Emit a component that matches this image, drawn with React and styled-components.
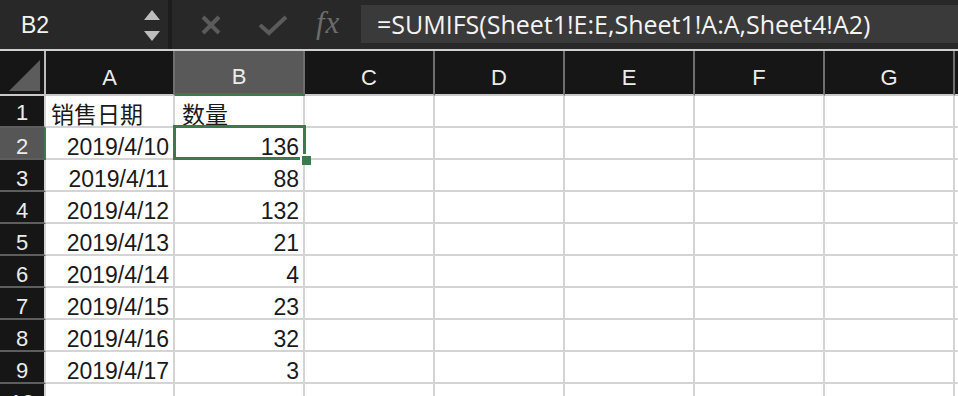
import React from "react";
import styled, { createGlobalStyle, css } from "styled-components";

const Global = createGlobalStyle`
  html, body { margin: 0; padding: 0; background: #ffffff; }
  body { width: 958px; height: 396px; overflow: hidden; font-family: "Liberation Sans", Arial, sans-serif; }
`;

const Page = styled.div`
  width: 958px;
  height: 396px;
  display: flex;
  flex-direction: column;
  overflow: hidden;
`;

const Toolbar = styled.div`
  height: 49px;
  flex: 0 0 49px;
  display: flex;
  align-items: stretch;
  background: #282828;
  border-bottom: 2px solid #cfcfcf;
`;

const NameBox = styled.div`
  width: 168px;
  display: flex;
  align-items: center;
  justify-content: space-between;
  padding: 2px 8px 0 21px;
  box-sizing: border-box;
  color: #f2f2f2;
  font-size: 23px;
`;

const Spinner = styled.div`
  display: flex;
  flex-direction: column;
  gap: 11px;
`;

const Divider = styled.div`
  width: 4px;
  background: #1d1d1d;
`;

const Actions = styled.div`
  display: flex;
  align-items: center;
  padding-left: 28px;
  width: 189px;
  box-sizing: border-box;
`;

const ActionIcon = styled.span`
  display: inline-flex;
  align-items: center;
  justify-content: center;
  width: ${(p) => p.$w}px;
  margin-right: ${(p) => p.$mr}px;
`;

const Fx = styled.span`
  font-family: "Liberation Serif", "Times New Roman", serif;
  font-style: italic;
  font-size: 31px;
  color: #6c6c6c;
  letter-spacing: 1px;
  margin-top: -3px;
`;

const FormulaInput = styled.div`
  flex: 1;
  margin: 5px 0 6px 0;
  background: #3a3a3a;
  display: flex;
  align-items: center;
  padding-left: 16px;
  color: #f4f4f4;
  font-family: "Open Sans", "Noto Sans", sans-serif;
  font-size: 25px;
  white-space: nowrap;
  overflow: hidden;
`;

const Sheet = styled.div`
  display: grid;
  grid-template-columns: 46px 129px 130px 130px 130px 130px 130px 130px 1fr;
  grid-template-rows: 45px;
  grid-auto-rows: 32px;
  background: #ffffff;
`;

const headerBase = css`
  box-sizing: border-box;
  background: #161616;
  color: #ececec;
  font-size: 22px;
  display: flex;
  align-items: center;
  justify-content: center;
`;

const Corner = styled.div`
  ${headerBase};
  border-right: 2px solid #bdbdbd;
  border-bottom: 2px solid #c9c9c9;
  align-items: flex-end;
  justify-content: flex-end;
  padding: 0 4px 3px 0;
`;

const ColHead = styled.div`
  ${headerBase};
  padding-top: 10px;
  border-right: 2px solid #6e6e6e;
  border-bottom: 2px solid ${(p) => (p.$active ? "#3a7a4e" : "#c9c9c9")};
  ${(p) =>
    p.$active &&
    css`
      background: #595959;
      border-bottom-width: 3px;
    `}
`;

const RowHead = styled.div`
  ${headerBase};
  border-bottom: 2px solid #5e5e5e;
  border-right: 2px solid ${(p) => (p.$active ? "#3a7a4e" : "#d4d4d4")};
  padding-top: ${(p) => (p.$first ? 4 : 8)}px;
  ${(p) =>
    p.$active &&
    css`
      background: #565656;
    `}
`;

const Cell = styled.div`
  box-sizing: border-box;
  position: relative;
  border-right: 2px solid #d4d4d4;
  border-bottom: 2px solid #d4d4d4;
  color: #1a1a1a;
  font-family: "Liberation Sans", Arial, "Noto Sans CJK SC", sans-serif;
  font-size: 23px;
  display: flex;
  align-items: center;
  padding: ${(p) => (p.$first ? 3 : 8)}px 4px 0 ${(p) => (p.$pl ? p.$pl : 4)}px;
  justify-content: ${(p) => (p.$right ? "flex-end" : "flex-start")};
  white-space: nowrap;
`;

const Selection = styled.div`
  position: absolute;
  z-index: 2;
  left: -2px;
  top: -3px;
  right: -3px;
  bottom: -2px;
  border: 3px solid #3a7a4e;
  pointer-events: none;
`;

const Handle = styled.div`
  position: absolute;
  right: -8px;
  bottom: -8px;
  width: 9px;
  height: 9px;
  background: #3a7a4e;
  box-shadow: -2px -2px 0 0 #ffffff;
`;

const cols = ["A", "B", "C", "D", "E", "F", "G", ""];
const data = [
  ["2019/4/10", "136"],
  ["2019/4/11", "88"],
  ["2019/4/12", "132"],
  ["2019/4/13", "21"],
  ["2019/4/14", "4"],
  ["2019/4/15", "23"],
  ["2019/4/16", "32"],
  ["2019/4/17", "3"],
];

export default function App() {
  const rows = [["销售日期", "数量", true], ...data.map((d) => [...d, false]), ["", "", false]];
  return (
    <Page>
      <Global />
      <Toolbar>
        <NameBox>
          <span>B2</span>
          <Spinner>
            <svg width="16" height="10" viewBox="0 0 16 10">
              <polygon points="8,0 16,10 0,10" fill="#bdbdbd" />
            </svg>
            <svg width="16" height="10" viewBox="0 0 16 10">
              <polygon points="0,0 16,0 8,10" fill="#bdbdbd" />
            </svg>
          </Spinner>
        </NameBox>
        <Divider />
        <Actions>
          <ActionIcon $w={22} $mr={36}>
            <svg width="22" height="22" viewBox="0 0 22 22">
              <path d="M3 3 L19 19 M19 3 L3 19" stroke="#5b5b5b" strokeWidth="4" />
            </svg>
          </ActionIcon>
          <ActionIcon $w={30} $mr={28}>
            <svg width="30" height="22" viewBox="0 0 30 22">
              <path d="M2 11 L11 19 L28 3" stroke="#5b5b5b" strokeWidth="4" fill="none" />
            </svg>
          </ActionIcon>
          <Fx>fx</Fx>
        </Actions>
        <FormulaInput>=SUMIFS(Sheet1!E:E,Sheet1!A:A,Sheet4!A2)</FormulaInput>
      </Toolbar>
      <Sheet>
        <Corner>
          <svg width="31" height="31" viewBox="0 0 31 31">
            <polygon points="31,0 31,31 0,31" fill="#5c5c5c" />
          </svg>
        </Corner>
        {cols.map((c, i) => (
          <ColHead key={i} $active={c === "B"}>
            {c}
          </ColHead>
        ))}
        {rows.map((r, ri) => {
          const n = ri + 1;
          const isText = r[2];
          return (
            <React.Fragment key={ri}>
              <RowHead $active={n === 2} $first={n === 1}>{n}</RowHead>
              <Cell $right={!isText} $first={isText} $pl={isText ? 5 : 4}>{r[0]}</Cell>
              <Cell $right={!isText} $first={isText} $pl={isText ? 7 : 4}>
                {r[1]}
                {n === 2 && (
                  <Selection>
                    <Handle />
                  </Selection>
                )}
              </Cell>
              {cols.slice(2).map((c, ci) => (
                <Cell key={ci} />
              ))}
            </React.Fragment>
          );
        })}
      </Sheet>
    </Page>
  );
}
